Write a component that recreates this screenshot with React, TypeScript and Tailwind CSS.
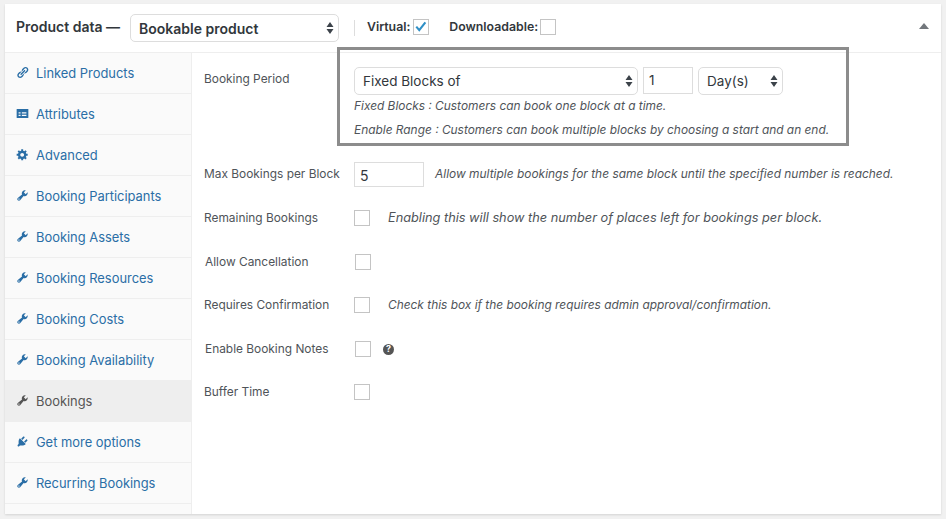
const font = "font-['Inter','Liberation_Sans',sans-serif]"

const wrench =
  "M16.68 9.77c-1.34 1.34-3.3 1.67-4.95.99l-5.41 6.52c-.99.99-2.59.99-3.58 0s-.99-2.59 0-3.58l6.52-5.41c-.68-1.65-.35-3.61.99-4.95 1.28-1.28 3.12-1.62 4.72-1.06l-2.89 2.89 2.82 2.82 2.86-2.87c.53 1.58.18 3.39-1.08 4.65zM3.81 16.21c.4.39 1.04.39 1.43 0 .4-.4.4-1.04 0-1.43-.39-.4-1.03-.4-1.43 0-.39.39-.39 1.03 0 1.43z"
const link =
  "M17.74 2.76c1.68 1.69 1.68 4.41 0 6.1l-1.53 1.52c-1.12 1.12-2.7 1.47-4.14 1.09l2.62-2.61.76-.77.76-.76c.84-.84.84-2.2 0-3.04-.84-.85-2.2-.85-3.04 0l-.77.76-3.38 3.38c-.37-1.44-.02-3.02 1.1-4.14l1.52-1.53c1.69-1.68 4.42-1.68 6.1 0zM8.59 13.43l5.34-5.34c.42-.42.42-1.1 0-1.52-.44-.43-1.13-.39-1.53 0l-5.33 5.34c-.42.42-.42 1.1 0 1.52.44.43 1.13.39 1.52 0zm-.76 2.29l4.14-4.15c.38 1.44.03 3.02-1.09 4.14l-1.52 1.53c-1.69 1.68-4.41 1.68-6.1 0-1.68-1.68-1.68-4.42 0-6.1l1.53-1.52c1.12-1.12 2.7-1.47 4.14-1.1l-4.14 4.15c-.85.84-.85 2.2 0 3.05.84.84 2.2.84 3.04 0z"
const gear =
  "M18 12h-2.18c-.17.7-.44 1.35-.81 1.93l1.54 1.54-2.1 2.1-1.54-1.54c-.58.36-1.23.63-1.91.79V19H8v-2.18c-.68-.16-1.33-.43-1.91-.79l-1.54 1.54-2.12-2.12 1.54-1.54c-.36-.58-.63-1.23-.79-1.91H1V9.03h2.17c.16-.7.44-1.35.8-1.94L2.43 5.55l2.1-2.1 1.54 1.54c.58-.37 1.24-.64 1.93-.81V2h3v2.18c.68.16 1.33.43 1.91.79l1.54-1.54 2.12 2.12-1.54 1.54c.36.59.64 1.24.8 1.94H18V12zm-8.5 1.5c1.66 0 3-1.34 3-3s-1.34-3-3-3-3 1.34-3 3 1.34 3 3 3z"
const plug =
  "M13.11 4.36L9.87 7.6 8 5.73l3.24-3.24c.35-.34 1.05-.2 1.56.32.52.51.66 1.21.31 1.55zm-8 1.77l.91-1.12 9.01 9.01-1.19.84c-.71.71-2.63 1.16-3.82 1.16H6.14L4.9 17.26c-.59.59-1.54.59-2.12 0-.59-.58-.59-1.53 0-2.12l1.24-1.24v-3.88c0-1.13.4-3.19 1.09-3.89zm7.26 3.97l3.24-3.24c.34-.35 1.04-.21 1.55.31.52.51.66 1.21.31 1.55l-3.24 3.25z"
const card =
  "M1.5 3h17c.28 0 .5.22.5.5v13c0 .28-.22.5-.5.5h-17c-.28 0-.5-.22-.5-.5v-13c0-.28.22-.5.5-.5zM4 8v2h3V8H4zm5 0v2h7V8H9zm-5 4v2h3v-2H4zm5 0v2h7v-2H9z"

const tabs = [
  { label: "Linked Products", icon: link },
  { label: "Attributes", icon: card },
  { label: "Advanced", icon: gear },
  { label: "Booking Participants", icon: wrench },
  { label: "Booking Assets", icon: wrench },
  { label: "Booking Resources", icon: wrench },
  { label: "Booking Costs", icon: wrench },
  { label: "Booking Availability", icon: wrench },
  { label: "Bookings", icon: wrench, active: true },
  { label: "Get more options", icon: plug },
  { label: "Recurring Bookings", icon: wrench },
]

function SelectArrows() {
  return (
    <svg width="8" height="14" viewBox="0 0 8 14" className="shrink-0 text-[#3c434a]">
      <path d="M4 1 7.5 6h-7zM4 13 .5 8h7z" fill="currentColor" />
    </svg>
  )
}

function SelectBox({ label, className }: { label: string; className: string }) {
  return (
    <div className={`flex items-center justify-between h-7 rounded-[5px] border border-[#ddd] bg-white pl-2 pr-1 ${className}`}>
      <span>{label}</span>
      <SelectArrows />
    </div>
  )
}

function Checkbox({ checked, className = "" }: { checked?: boolean; className?: string }) {
  return (
    <div className={`relative w-4 h-4 shrink-0 border border-[#c4c4c4] bg-white ${className}`}>
      {checked && (
        <svg viewBox="0 0 16 16" className="absolute left-0 top-0 w-[14px] h-[14px]">
          <path d="M2.6 7.6 6 11.6 13 2.6" fill="none" stroke="#2f8fc6" strokeWidth="2.4" />
        </svg>
      )}
    </div>
  )
}

function Row({ label, children, className = "" }: { label: string; children?: React.ReactNode; className?: string }) {
  return (
    <div className={`flex items-center h-[20px] ${className}`}>
      <span className="w-[150px] shrink-0 text-[11.9px] text-[#4f5459] whitespace-nowrap">{label}</span>
      {children}
    </div>
  )
}

function Note({ children, className = "" }: { children: React.ReactNode; className?: string }) {
  return <span className={`italic text-[#4f5459] whitespace-nowrap ${className}`}>{children}</span>
}

export default function App() {
  return (
    <div className={`${font} relative w-[946px] h-[519px] overflow-hidden bg-[#f1f1f1] pt-1 pl-[5px] pr-[5px] text-[#32373c]`}>
      <div className="relative h-[510px] w-[936px] bg-white shadow-[0_1px_2px_rgba(0,0,0,0.12)] flex flex-col">
        <div className="flex items-center h-[49px] shrink-0 border-b border-[#eee] pl-[11px] text-[12.3px] font-semibold">
          <span className="w-[114px] mb-[4px] text-[14px] whitespace-nowrap">Product data —</span>
          <SelectBox label="Bookable product" className="w-[209px] text-[14px]" />
          <div className="ml-[15px] mb-[1px] h-4 w-px bg-[#ddd]" />
          <span className="ml-3 mb-[2px]">Virtual:</span>
          <Checkbox checked className="ml-[3px] mb-[2px] border-[#b5bfc9]" />
          <span className="ml-[20px] mb-[2px]">Downloadable:</span>
          <Checkbox className="ml-[2px] mb-[2px]" />
          <svg width="10" height="6" viewBox="0 0 10 6" className="ml-auto mr-[12px] mb-[4px] text-[#72777c]">
            <path d="M5 0l5 6H0z" fill="currentColor" />
          </svg>
        </div>
        <div className="flex flex-1 min-h-0">
          <div className="w-[187px] shrink-0 bg-[#fafafa] border-r border-[#eee]">
            {tabs.map((t) => (
              <div
                key={t.label}
                className={`flex items-center h-[41px] border-b pl-[11px] text-[12.9px] ${
                  t.active ? "bg-[#eee] border-[#eee] text-[#555]" : "border-[#eee] text-[#2a6ea6]"
                }`}
              >
                <svg viewBox="0 0 20 20" className="w-[13px] h-[13px] -mt-[2px] shrink-0" fill="currentColor" fillRule="evenodd">
                  <path d={t.icon} />
                </svg>
                <span className="ml-[7px] mt-[2px] whitespace-nowrap">{t.label}</span>
              </div>
            ))}
          </div>
          <div className="flex-1 pl-3 pt-[14px]">
            <div className="flex h-[97px] text-[#4f5459]">
              <span className="w-[150px] shrink-0 mt-[3px] text-[11.9px]">Booking Period</span>
              <div>
                <div className="flex items-start gap-[5px] text-[13.5px] text-[#32373c]">
                  <SelectBox label="Fixed Blocks of" className="w-[284px] font-normal" />
                  <div className="flex items-center w-[50px] h-[27px] border border-[#ddd] bg-white pl-[5px]">1</div>
                  <SelectBox label="Day(s)" className="w-[85px]" />
                </div>
                <div className="-mt-[1px] leading-[24px] flex flex-col text-[11.9px]">
                  <Note>Fixed Blocks : Customers can book one block at a time.</Note>
                  <Note>Enable Range : Customers can book multiple blocks by choosing a start and an end.</Note>
                </div>
              </div>
            </div>
            <Row label="Max Bookings per Block">
              <div className="flex items-center w-[70px] h-[25px] border border-[#ddd] bg-white pl-[5px] pt-[2px] text-[14px] text-[#32373c]">5</div>
              <Note className="ml-[11px] text-[11.95px]">Allow multiple bookings for the same block until the specified number is reached.</Note>
            </Row>
            <Row label="Remaining Bookings" className="mt-[24px]">
              <Checkbox />
              <Note className="ml-[18px] text-[12.75px]">Enabling this will show the number of places left for bookings per block.</Note>
            </Row>
            <Row label="Allow Cancellation" className="mt-[24px] ml-px">
              <Checkbox />
            </Row>
            <Row label="Requires Confirmation" className="mt-[23px]">
              <Checkbox />
              <Note className="ml-[18px] text-[11.9px]">Check this box if the booking requires admin approval/confirmation.</Note>
            </Row>
            <Row label="Enable Booking Notes" className="mt-[24px] ml-px">
              <Checkbox />
              <div className="ml-3 flex items-center justify-center w-[11px] h-[11px] rounded-full bg-[#555] text-white text-[9px] font-bold">?</div>
            </Row>
            <Row label="Buffer Time" className="mt-[23px]">
              <Checkbox />
            </Row>
          </div>
        </div>
      </div>
      {/* callout frame drawn on top of the screenshot */}
      <div className="absolute left-[337px] top-[47px] w-[512px] h-[99px] border-[3px] border-[#8c8c8c]" />
    </div>
  )
}
